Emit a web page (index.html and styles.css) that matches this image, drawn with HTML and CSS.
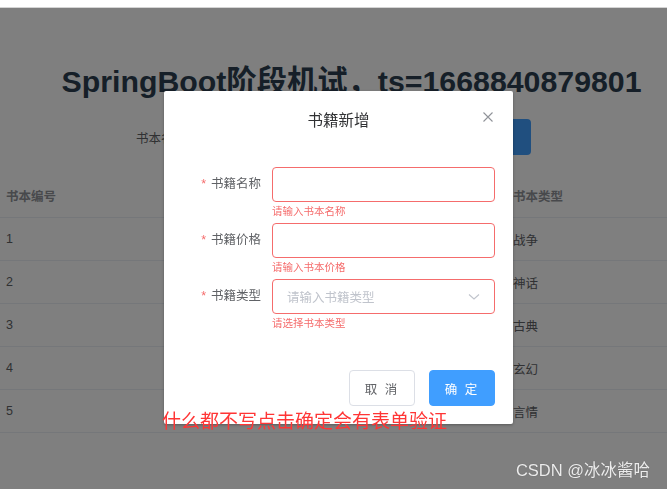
FILE: index.html
```html
<!DOCTYPE html>
<html lang="zh">

<head>
    <meta charset="UTF-8">
    <meta name="viewport" content="width=device-width, initial-scale=1.0">
    <title>书籍管理</title>
    <link rel="stylesheet" href="styles.css">
</head>

<body>
    <div class="topbar"></div>

    <div class="page">
        <h1 class="title">SpringBoot阶段机试，ts=1668840879801</h1>

        <div class="search">
            <label class="search-label">书本名称</label>
            <input class="search-input" type="text">
            <button class="search-btn" type="button">查询</button>
        </div>

        <table class="book-table">
            <thead>
                <tr>
                    <th class="col-id">书本编号</th>
                    <th>书本名称</th>
                    <th>书本价格</th>
                    <th class="col-type">书本类型</th>
                </tr>
            </thead>
            <tbody>
                <tr><td>1</td><td></td><td></td><td>战争</td></tr>
                <tr><td>2</td><td></td><td></td><td>神话</td></tr>
                <tr><td>3</td><td></td><td></td><td>古典</td></tr>
                <tr><td>4</td><td></td><td></td><td>玄幻</td></tr>
                <tr><td>5</td><td></td><td></td><td>言情</td></tr>
            </tbody>
        </table>
    </div>

    <div class="mask"></div>

    <div class="dialog">
        <div class="dialog-header">
            <span class="dialog-title">书籍新增</span>
            <span class="dialog-close">
                <svg width="10" height="10" viewBox="0 0 10 10">
                    <path d="M0.5 0.5 L9.5 9.5 M9.5 0.5 L0.5 9.5" stroke="#909399" stroke-width="1.1" fill="none" />
                </svg>
            </span>
        </div>

        <form class="dialog-body">
            <div class="form-item">
                <span class="req">*</span>
                <label class="form-label">书籍名称</label>
                <div class="form-content">
                    <input class="field is-error" type="text">
                    <div class="form-error">请输入书本名称</div>
                </div>
            </div>
            <div class="form-item">
                <span class="req">*</span>
                <label class="form-label">书籍价格</label>
                <div class="form-content">
                    <input class="field is-error" type="text">
                    <div class="form-error">请输入书本价格</div>
                </div>
            </div>
            <div class="form-item">
                <span class="req">*</span>
                <label class="form-label">书籍类型</label>
                <div class="form-content">
                    <div class="field is-error select">
                        <span class="placeholder">请输入书籍类型</span>
                        <svg width="12" height="8" viewBox="0 0 12 8">
                            <path d="M1 1.5 L6 6 L11 1.5" stroke="#c0c4cc" stroke-width="1.1" fill="none" />
                        </svg>
                    </div>
                    <div class="form-error">请选择书本类型</div>
                </div>
            </div>
        </form>

        <div class="dialog-footer">
            <button class="btn" type="button">取 消</button>
            <button class="btn btn-primary" type="button">确 定</button>
        </div>
    </div>

    <div class="note">什么都不写点击确定会有表单验证</div>
    <div class="watermark">CSDN @冰冰酱哈</div>
</body>

</html>
```

FILE: styles.css
```css
body {
    margin: 0;
    font-family: "Liberation Sans", "Noto Sans CJK SC", sans-serif;
    color: #2c3e50;
    background: #fff;
    overflow: hidden;
}

.topbar {
    height: 7px;
    border-bottom: 1px solid #d4d4d4;
    background: #fff;
}

.page {
    height: 481px;
}

.title {
    margin: 0;
    padding: 56px 0 0 36px;
    font-size: 30.3px;
    line-height: 36px;
    font-weight: bold;
    text-align: center;
    white-space: nowrap;
}

.search {
    display: flex;
    align-items: center;
    padding: 19px 0 0 136px;
    height: 36px;
}

.search-label {
    font-size: 12.5px;
    color: #606266;
    width: 60px;
}

.search-input {
    width: 263px;
    height: 34px;
    margin-right: 10px;
    border: 1px solid #dcdfe6;
    border-radius: 4px;
    box-sizing: border-box;
}

.search-btn {
    width: 62px;
    height: 36px;
    border: none;
    border-radius: 4px;
    background: #409eff;
    color: #fff;
}

.book-table {
    width: 100%;
    margin-top: 15px;
    border-collapse: collapse;
    font-size: 12.5px;
}

.book-table th,
.book-table td {
    text-align: left;
    padding: 0 6px;
    border-bottom: 1px solid #ebeef5;
}

.book-table th {
    height: 44px;
    padding-top: 3px;
    color: #909399;
    font-weight: bold;
}

.book-table td {
    height: 42px;
    color: #606266;
}

.book-table .col-id,
.book-table th:nth-child(2),
.book-table th:nth-child(3) {
    width: 157px;
}

.mask {
    position: fixed;
    left: 0;
    right: 0;
    top: 8px;
    bottom: 0;
    background: rgba(0, 0, 0, 0.5);
}

.dialog {
    position: absolute;
    left: 164px;
    top: 91px;
    width: 349px;
    height: 333px;
    background: #fff;
    border-radius: 2px;
    box-shadow: 0 1px 3px rgba(0, 0, 0, 0.3);
    box-sizing: border-box;
}

.dialog-header {
    position: relative;
    height: 56px;
    display: flex;
    align-items: center;
    justify-content: center;
}

.dialog-title {
    font-size: 15.5px;
    color: #303133;
}

.dialog-close {
    position: absolute;
    right: 20px;
    top: 21px;
    line-height: 0;
}

.dialog-body {
    padding: 20px 18px 0 18px;
    margin: 0;
}

.form-item {
    display: flex;
    height: 56px;
}

.req {
    width: 24px;
    padding-right: 5px;
    text-align: right;
    font-size: 12.5px;
    line-height: 35px;
    color: #f56c6c;
}

.form-label {
    width: 51px;
    padding-right: 10px;
    text-align: left;
    font-size: 12.5px;
    color: #606266;
    line-height: 35px;
    white-space: nowrap;
}

.form-content {
    flex: 1;
}

.field {
    display: block;
    width: 100%;
    height: 35px;
    margin: 0;
    padding: 0 14px;
    border: 1px solid #dcdfe6;
    border-radius: 4px;
    box-sizing: border-box;
    outline: none;
}

.field.is-error {
    border-color: #f56c6c;
}

.select {
    display: flex;
    align-items: center;
    justify-content: space-between;
    font-size: 12.5px;
}

.placeholder {
    color: #c0c4cc;
}

.form-error {
    font-size: 10.5px;
    line-height: 14px;
    padding-top: 2px;
    color: #f56c6c;
}

.dialog-footer {
    display: flex;
    justify-content: flex-end;
    gap: 14px;
    padding: 35px 18px 0 0;
}

.btn {
    width: 66px;
    height: 36px;
    border: 1px solid #dcdfe6;
    border-radius: 4px;
    background: #fff;
    color: #606266;
    font-family: inherit;
    font-size: 12.5px;
    letter-spacing: 2px;
}

.btn-primary {
    border-color: #409eff;
    background: #409eff;
    color: #fff;
}

.note {
    position: absolute;
    left: 162px;
    top: 410px;
    font-size: 19px;
    line-height: 24px;
    color: #ff3535;
    white-space: nowrap;
}

.watermark {
    position: absolute;
    right: 17px;
    top: 460px;
    font-size: 16.5px;
    line-height: 20px;
    color: #ececec;
    text-shadow: 0 0 1px rgba(0, 0, 0, 0.3);
}
```
